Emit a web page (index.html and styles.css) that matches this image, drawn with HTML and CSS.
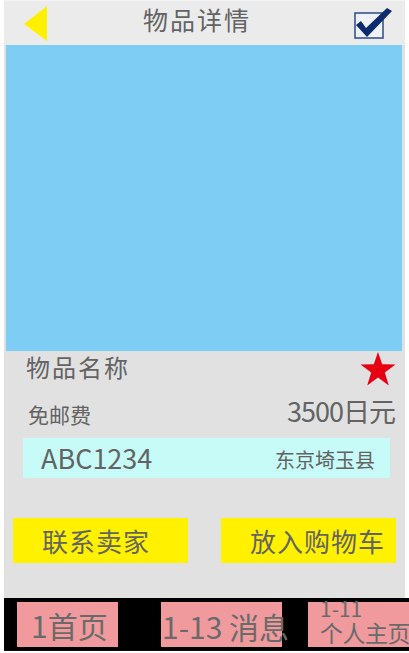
FILE: index.html
```html
<!DOCTYPE html>
<html lang="zh">
<head>
<meta charset="utf-8">
<link rel="stylesheet" href="styles.css">
</head>
<body>
<div class="page">
  <header class="topbar">
    <svg class="back" width="26" height="36" viewBox="0 0 26 36"><polygon points="1,18 24,0 24,35" fill="#fff000"/></svg>
    <h1 class="title">物品详情</h1>
    <svg class="check" width="40" height="34" viewBox="0 0 40 34">
      <rect x="2" y="8" width="28" height="25" fill="#eef1f6" stroke="#2b4a8e" stroke-width="1.5"/>
      <path d="M3 20 L8 16 L13 23 L34 3 L39 6 L14 32 Z" fill="#0c2b6e"/>
    </svg>
  </header>
  <div class="photo"></div>
  <section class="info">
    <div class="row name-row">
      <span class="name">物品名称</span>
      <svg class="star" width="36" height="34" viewBox="0 0 36 34"><polygon points="18,0 22.2,12.3 35.5,12.5 24.8,20.4 28.8,33.5 18,25.6 7.2,33.5 11.2,20.4 0.5,12.5 13.8,12.3" fill="#e60012"/></svg>
    </div>
    <div class="row price-row">
      <span class="ship">免邮费</span>
      <span class="price">3500日元</span>
    </div>
    <div class="code-box">
      <span class="code">ABC1234</span>
      <span class="place">东京埼玉县</span>
    </div>
    <div class="actions">
      <button class="btn btn-contact">联系卖家</button>
      <button class="btn btn-cart">放入购物车</button>
    </div>
  </section>
</div>
<nav class="tabbar">
  <div class="tab tab-home">1首页</div>
  <div class="tab tab-msg">1-13 消息</div>
  <div class="tab tab-me"><span class="tab-num">1-11</span><span class="tab-label">个人主页</span></div>
</nav>
</body>
</html>
```
FILE: styles.css
```css
* { box-sizing: border-box; }
html, body { margin: 0; padding: 0; }
body {
  background: #ffffff;
  width: 409px;
  height: 653px;
  overflow: hidden;
  font-family: "Noto Sans CJK SC", "Noto Sans", sans-serif;
  font-weight: 400;
  color: #636363;
}
.page {
  margin-left: 4px;
  width: 401px;
  background: #e1e1e1;
  border-top: 1px solid #f4f4f4;
}
.topbar {
  height: 44px;
  background: #ebebeb;
  display: flex;
  align-items: center;
  position: relative;
  padding-left: 19px;
}
.back { margin-top: 1px; }
.title {
  margin: 0;
  font-weight: 400;
  font-size: 25px;
  line-height: 44px;
  letter-spacing: 2px;
  position: absolute;
  left: 139px;
  top: -4px;
}
.check { position: absolute; left: 349px; top: 4px; }
.photo {
  height: 306px;
  margin: 0 3px 0 2px;
  background: #7ecdf4;
}
.info { padding: 0 0 35px; }
.row {
  display: flex;
  justify-content: space-between;
  align-items: center;
}
.name-row { height: 35px; padding: 0 9px 0 22px; }
.name { font-size: 24px; letter-spacing: 2px; line-height: 30px; margin-top: -4px; }
.price-row { height: 51px; padding: 0 10px 0 24px; }
.ship { font-size: 21px; line-height: 26px; margin-top: 4px; }
.price { font-size: 27px; line-height: 32px; letter-spacing: -1px; margin-top: -2px; }
.code-box {
  margin: 1px 15px 0 19px;
  height: 40px;
  background: #c6fbf7;
  display: flex;
  justify-content: space-between;
  align-items: center;
  padding: 0 15px 0 18px;
}
.code { font-size: 27px; line-height: 34px; margin-top: -1px; }
.place { font-size: 20px; line-height: 24px; margin-top: 4px; }
.actions {
  margin-top: 40px;
  display: flex;
  justify-content: space-between;
  padding: 0 9px 0 9px;
}
.btn {
  border: 0;
  margin: 0;
  width: 175px;
  height: 45px;
  background: #fff100;
  color: #636363;
  font-family: "Noto Sans CJK SC", sans-serif;
  font-weight: 400;
  font-size: 26px;
  line-height: 30px;
  padding: 0;
  letter-spacing: 1px;
}
.btn-contact { text-align: left; padding-left: 29px; }
.btn-cart { text-align: left; padding-left: 29px; }
.tabbar {
  margin-left: 4px;
  width: 405px;
  height: 53px;
  background: #000000;
  border-bottom: 1px solid #111;
  display: flex;
  align-items: flex-start;
  padding-top: 4px;
}
.tab {
  background: #f09a9e;
  height: 45px;
  color: #6a6a6a;
  white-space: nowrap;
}
.tab-home {
  margin-left: 13px;
  width: 101px;
  font-size: 30px;
  line-height: 46px;
  padding-left: 14px;
}
.tab-msg {
  margin-left: 43px;
  width: 121px;
  font-size: 30px;
  line-height: 48px;
  padding-left: 1px;
}
.tab-me {
  margin-left: 26px;
  width: 101px;
  padding-left: 12px;
  display: flex;
  flex-direction: column;
}
.tab-num { margin-top: -5px; font-size: 21px; line-height: 22px; }
.tab-label { margin-top: 1px; font-size: 23px; line-height: 25px; letter-spacing: -0.5px; }
```
